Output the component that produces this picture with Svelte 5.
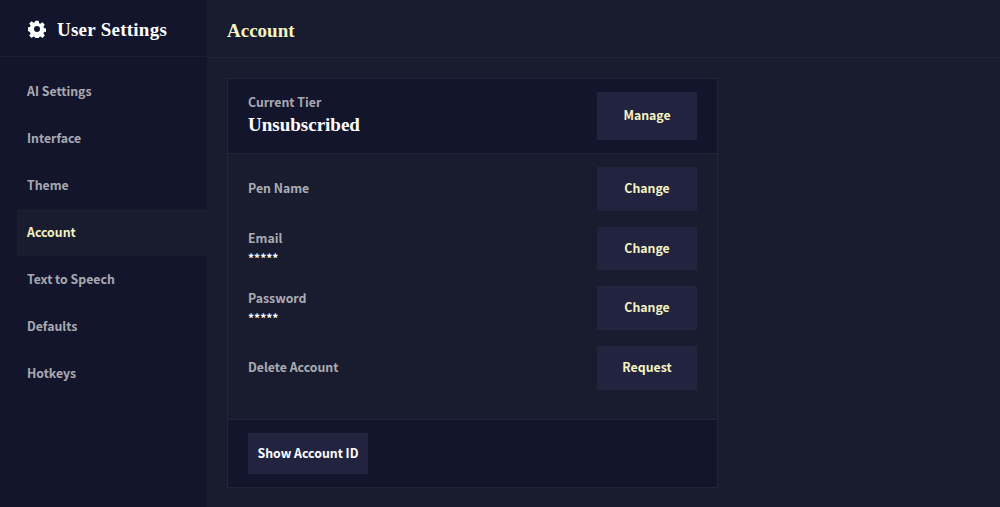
<script lang="ts">
	const tabs = ['AI Settings', 'Interface', 'Theme', 'Account', 'Text to Speech', 'Defaults', 'Hotkeys'];
	const selected = 'Account';

	const rows = [
		{ label: 'Pen Name', value: '', action: 'Change' },
		{ label: 'Email', value: '*****', action: 'Change' },
		{ label: 'Password', value: '*****', action: 'Change' },
		{ label: 'Delete Account', value: '', action: 'Request' }
	];
</script>

<div class="settings">
	<aside class="sidebar">
		<div class="sidebar-title">
			<svg class="gear" viewBox="0 0 24 24" width="18" height="18" aria-hidden="true">
				<path
					fill="#fff"
					fill-rule="evenodd"
					d="M9.8 1h4.4l.6 3.2 1.8.8 2.7-1.9 3.1 3.1-1.9 2.7.8 1.8 3.2.6v4.4l-3.2.6-.8 1.8 1.9 2.7-3.1 3.1-2.7-1.9-1.8.8-.6 3.2H9.8l-.6-3.2-1.8-.8-2.7 1.9-3.1-3.1 1.9-2.7-.8-1.8L-.5 14.2V9.8l3.2-.6.8-1.8-1.9-2.7 3.1-3.1 2.7 1.9 1.8-.8zM12 8a4 4 0 1 0 0 8 4 4 0 0 0 0-8z"
				/>
			</svg>
			<span>User Settings</span>
		</div>
		<nav class="tabs">
			{#each tabs as tab (tab)}
				<button type="button" class="tab" class:active={tab === selected}>{tab}</button>
			{/each}
		</nav>
	</aside>

	<main class="content">
		<header class="content-header">Account</header>
		<div class="content-body">
			<section class="card">
				<div class="card-top">
					<div>
						<div class="label">Current Tier</div>
						<div class="tier">Unsubscribed</div>
					</div>
					<button type="button" class="btn btn-manage">Manage</button>
				</div>
				<div class="card-rows">
					{#each rows as row (row.label)}
						<div class="row">
							<div>
								<div class="label">{row.label}</div>
								{#if row.value}
									<div class="value">{row.value}</div>
								{/if}
							</div>
							<button type="button" class="btn">{row.action}</button>
						</div>
					{/each}
				</div>
				<div class="card-bottom">
					<button type="button" class="btn btn-id">Show Account ID</button>
				</div>
			</section>
		</div>
	</main>
</div>

<style>
	:global(body) {
		margin: 0;
		background: #191b2f;
	}

	.settings {
		display: flex;
		height: 507px;
		overflow: hidden;
		font-family: 'Noto Sans CJK SC', 'Noto Sans', sans-serif;
		font-weight: 700;
		font-size: 12.3px;
		color: #fff;
		background: #191b2f;
	}

	.sidebar {
		width: 207px;
		flex-shrink: 0;
		background: #13152c;
	}

	.sidebar-title {
		display: flex;
		align-items: center;
		gap: 11px;
		height: 57px;
		box-sizing: border-box;
		padding: 3px 0 0 28px;
		border-bottom: 1px solid #1c1e35;
		font-family: 'Liberation Serif', serif;
		font-size: 19px;
		font-weight: 700;
		letter-spacing: 0.25px;
	}

	.gear {
		flex-shrink: 0;
		margin-top: -2px;
	}

	.tabs {
		display: flex;
		flex-direction: column;
		padding: 11px 0 0 17px;
	}

	.tab {
		height: 47px;
		padding: 0 0 2px 10px;
		border: 0;
		background: none;
		color: rgba(255, 255, 255, 0.65);
		font: inherit;
		text-align: left;
	}

	.tab.active {
		background: #191b2f;
		color: #f5f3c2;
	}

	.content {
		flex: 1;
		min-width: 0;
	}

	.content-header {
		display: flex;
		align-items: center;
		height: 58px;
		box-sizing: border-box;
		padding: 4px 0 0 20px;
		border-bottom: 1px solid #22243a;
		font-family: 'Liberation Serif', serif;
		font-size: 19px;
		color: #f5f3c2;
	}

	.content-body {
		padding: 20px;
	}

	.card {
		width: 491px;
		height: 410px;
		box-sizing: border-box;
		display: flex;
		flex-direction: column;
		border: 1px solid #23253e;
	}

	.card-top {
		display: flex;
		align-items: center;
		justify-content: space-between;
		height: 75px;
		box-sizing: border-box;
		padding: 0 20px;
		background: #13152c;
		border-bottom: 1px solid #23253e;
	}

	.card-rows {
		flex: 1;
		padding: 13px 20px 0;
		display: flex;
		flex-direction: column;
		gap: 16px;
	}

	.row {
		display: flex;
		align-items: center;
		justify-content: space-between;
	}

	.label {
		color: rgba(255, 255, 255, 0.65);
		line-height: 16px;
	}

	.label:only-child {
		padding-bottom: 2px;
	}

	.tier {
		margin-top: 2px;
		font-family: 'Liberation Serif', serif;
		font-size: 19px;
		line-height: 26px;
	}

	.value {
		margin: 2.5px 0 -1.5px;
		font-size: 12px;
		line-height: 20px;
	}

	.btn {
		width: 100px;
		height: 43.67px;
		padding: 0 0 1.6px;
		border: 0;
		background: #22243f;
		color: #f5f3c2;
		font: inherit;
	}

	.btn-manage {
		height: 48px;
	}

	.card-bottom {
		height: 68px;
		box-sizing: border-box;
		display: flex;
		align-items: center;
		padding: 0 20px;
		background: #13152c;
		border-top: 1px solid #23253e;
	}

	.btn-id {
		width: 120px;
		height: 41px;
		color: #fff;
	}
</style>
